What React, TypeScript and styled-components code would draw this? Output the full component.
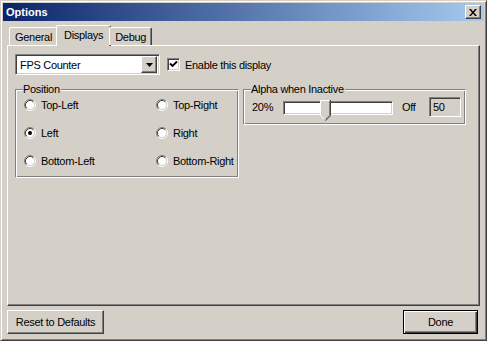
import React, { useState } from "react";
import styled, { createGlobalStyle, css } from "styled-components";

const GlobalStyle = createGlobalStyle`
  html, body {
    margin: 0;
    padding: 0;
    background: #d4d0c8;
  }
  body {
    font-family: "Liberation Sans", Arial, sans-serif;
    font-size: 11px;
    letter-spacing: -0.3px;
    color: #000;
  }
`;

const raised = css`
  border: 1px solid;
  border-color: #fff #404040 #404040 #fff;
  box-shadow: inset -1px -1px #808080;
`;

const sunken = css`
  border: 1px solid;
  border-color: #808080 #fff #fff #808080;
  box-shadow: inset 1px 1px #404040, inset -1px -1px #d4d0c8;
`;

const Window = styled.div`
  width: 487px;
  height: 341px;
  box-sizing: border-box;
  padding: 2px;
  border: 1px solid;
  border-color: #d4d0c8 #404040 #404040 #d4d0c8;
  box-shadow: inset 1px 1px #fff, inset -1px -1px #808080;
  background: #d4d0c8;
  display: flex;
  flex-direction: column;
`;

const TitleBar = styled.div`
  height: 18px;
  flex: none;
  display: flex;
  align-items: center;
  justify-content: space-between;
  padding: 0 3px 0 3px;
  background: linear-gradient(to right, #0a246a, #a6caf0);
`;

const Title = styled.span`
  color: #fff;
  font-weight: bold;
  font-size: 11px;
  letter-spacing: 0;
`;

const CloseButton = styled.button`
  ${raised};
  width: 16px;
  height: 14px;
  padding: 0;
  background: #d4d0c8;
  display: flex;
  align-items: center;
  justify-content: center;
`;

const Body = styled.div`
  flex: 1;
  display: flex;
  flex-direction: column;
  padding: 4px;
`;

const TabStrip = styled.div`
  height: 20px;
  flex: none;
  display: flex;
  align-items: flex-end;
  padding-left: 2px;
  position: relative;
  z-index: 1;
`;

const Tab = styled.div<{ $active?: boolean }>`
  height: 18px;
  box-sizing: border-box;
  padding: 0 5px;
  display: flex;
  align-items: center;
  white-space: nowrap;
  border-top: 1px solid #fff;
  border-left: 1px solid #fff;
  border-right: 1px solid #404040;
  box-shadow: inset -1px 0 #808080;
  border-radius: 2px 2px 0 0;
  background: #d4d0c8;
  ${(p) =>
    p.$active &&
    css`
      height: 21px;
      margin: 0 -2px -1px;
      padding: 0 7px 2px;
    `}
`;

const TabPanel = styled.div`
  ${raised};
  height: 261px;
  box-sizing: border-box;
  flex: none;
  padding: 8px 7px;
`;

const TopRow = styled.div`
  display: flex;
  align-items: center;
`;

const Combo = styled.div`
  ${sunken};
  width: 145px;
  height: 21px;
  box-sizing: border-box;
  background: #fff;
  display: flex;
  align-items: center;
  padding: 2px;
`;

const ComboText = styled.span`
  flex: 1;
  padding-left: 2px;
`;

const ComboButton = styled.div`
  ${raised};
  width: 16px;
  height: 17px;
  box-sizing: border-box;
  background: #d4d0c8;
  display: flex;
  align-items: center;
  justify-content: center;
`;

const CheckLabel = styled.label`
  display: flex;
  align-items: center;
  gap: 5px;
  margin-left: 7px;
`;

const CheckBox = styled.span`
  ${sunken};
  width: 13px;
  height: 13px;
  box-sizing: border-box;
  background: #fff;
  display: flex;
  align-items: center;
  justify-content: center;
`;

const GroupRow = styled.div`
  display: flex;
  align-items: flex-start;
  gap: 4px;
  margin-top: 8px;
`;

const GroupBox = styled.fieldset<{ $width: number }>`
  width: ${(p) => p.$width}px;
  min-width: 0;
  flex: none;
  box-sizing: border-box;
  margin: 0;
  padding: 0 4px 7px 8px;
  border: 1px solid;
  border-color: #808080 #fff #fff #808080;
  box-shadow: inset 1px 1px #fff, inset -1px -1px #808080;
`;

const Legend = styled.legend`
  padding: 0 1px 0 0;
  margin-left: -1px;
  line-height: 13px;
  background: #d4d0c8;
`;

const RadioGrid = styled.div`
  display: grid;
  grid-template-columns: 132px 1fr;
  grid-auto-rows: 18px;
  row-gap: 10px;
`;

const RadioItem = styled.label`
  display: flex;
  align-items: center;
  gap: 5px;
  white-space: nowrap;
`;

const SliderRow = styled.div`
  display: grid;
  grid-template-columns: 31px 110px 36px 32px;
  align-items: center;
  height: 20px;
  padding-top: 1px;
`;

const Track = styled.div`
  ${sunken};
  position: relative;
  height: 14px;
  box-sizing: border-box;
  background: #fff;
  margin-top: 1px;
`;

const Thumb = styled.svg`
  position: absolute;
  top: -2px;
  left: 36px;
`;

const OffLabel = styled.span`
  padding-left: 9px;
`;

const ValueBox = styled.div`
  ${sunken};
  height: 20px;
  box-sizing: border-box;
  background: #d4d0c8;
  padding: 2px 3px;
  line-height: 14px;
`;

const Footer = styled.div`
  display: flex;
  justify-content: space-between;
  margin-top: 4px;
`;

const Button = styled.button<{ $width: number; $default?: boolean }>`
  ${raised};
  width: ${(p) => p.$width}px;
  height: 24px;
  padding: 0;
  background: #d4d0c8;
  font-family: "Liberation Sans", Arial, sans-serif;
  font-size: 11px;
  letter-spacing: -0.3px;
  color: #000;
  ${(p) =>
    p.$default &&
    css`
      border: 1px solid #000;
      box-shadow: inset 1px 1px #fff, inset -1px -1px #404040, inset -2px -2px #808080;
      margin-right: 2px;
    `}
`;

const Radio = ({ checked }: { checked?: boolean }) => (
  <svg width="12" height="12" viewBox="0 0 12 12">
    <circle cx="6" cy="6" r="4.5" fill="#fff" />
    <path d="M2.11 9.89A5.5 5.5 0 0 1 9.89 2.11" fill="none" stroke="#808080" />
    <path d="M9.89 2.11A5.5 5.5 0 0 1 2.11 9.89" fill="none" stroke="#fff" />
    <path d="M2.82 9.18A4.5 4.5 0 0 1 9.18 2.82" fill="none" stroke="#404040" />
    <path d="M9.18 2.82A4.5 4.5 0 0 1 2.82 9.18" fill="none" stroke="#d4d0c8" />
    {checked && <circle cx="6" cy="6" r="2" fill="#000" />}
  </svg>
);

const positions = [
  ["Top-Left", "Top-Right"],
  ["Left", "Right"],
  ["Bottom-Left", "Bottom-Right"],
];

export default function App() {
  const [pos] = useState("Left");

  return (
    <>
      <GlobalStyle />
      <Window>
        <TitleBar>
          <Title>Options</Title>
          <CloseButton>
            <svg width="8" height="7" viewBox="0 0 8 7">
              <path d="M0 0h2l2 2.4L6 0h2L5 3.5 8 7H6L4 4.6 2 7H0l3-3.5z" fill="#000" />
            </svg>
          </CloseButton>
        </TitleBar>
        <Body>
          <TabStrip>
            <Tab>General</Tab>
            <Tab $active>Displays</Tab>
            <Tab>Debug</Tab>
          </TabStrip>
          <TabPanel>
            <TopRow>
              <Combo>
                <ComboText>FPS Counter</ComboText>
                <ComboButton>
                  <svg width="7" height="4" viewBox="0 0 7 4">
                    <path d="M0 0h7L3.5 4z" fill="#000" />
                  </svg>
                </ComboButton>
              </Combo>
              <CheckLabel>
                <CheckBox>
                  <svg width="9" height="9" viewBox="0 0 9 9">
                    <path d="M1 3.5l2.5 2.5L8 1.5" fill="none" stroke="#000" strokeWidth="1.9" />
                  </svg>
                </CheckBox>
                Enable this display
              </CheckLabel>
            </TopRow>
            <GroupRow>
              <GroupBox $width={224}>
                <Legend>Position</Legend>
                <RadioGrid>
                  {positions.flat().map((p) => (
                    <RadioItem key={p}>
                      <Radio checked={p === pos} />
                      {p}
                    </RadioItem>
                  ))}
                </RadioGrid>
              </GroupBox>
              <GroupBox $width={223}>
                <Legend>Alpha when Inactive</Legend>
                <SliderRow>
                  <span>20%</span>
                  <Track>
                    <Thumb width="11" height="21" viewBox="0 0 11 21">
                      <path d="M0.5 0.5h10v15l-5 5-5-5z" fill="#d4d0c8" />
                      <path d="M0.5 15.5v-15h9" fill="none" stroke="#fff" />
                      <path d="M10.5 0v15.7l-5 5" fill="none" stroke="#404040" />
                      <path d="M9.5 1v14.3l-4 4" fill="none" stroke="#808080" />
                      <path d="M0.5 15.5l3.5 3.5" fill="none" stroke="#fff" />
                    </Thumb>
                  </Track>
                  <OffLabel>Off</OffLabel>
                  <ValueBox>50</ValueBox>
                </SliderRow>
              </GroupBox>
            </GroupRow>
          </TabPanel>
          <Footer>
            <Button $width={97}>Reset to Defaults</Button>
            <Button $width={75} $default>
              Done
            </Button>
          </Footer>
        </Body>
      </Window>
    </>
  );
}
